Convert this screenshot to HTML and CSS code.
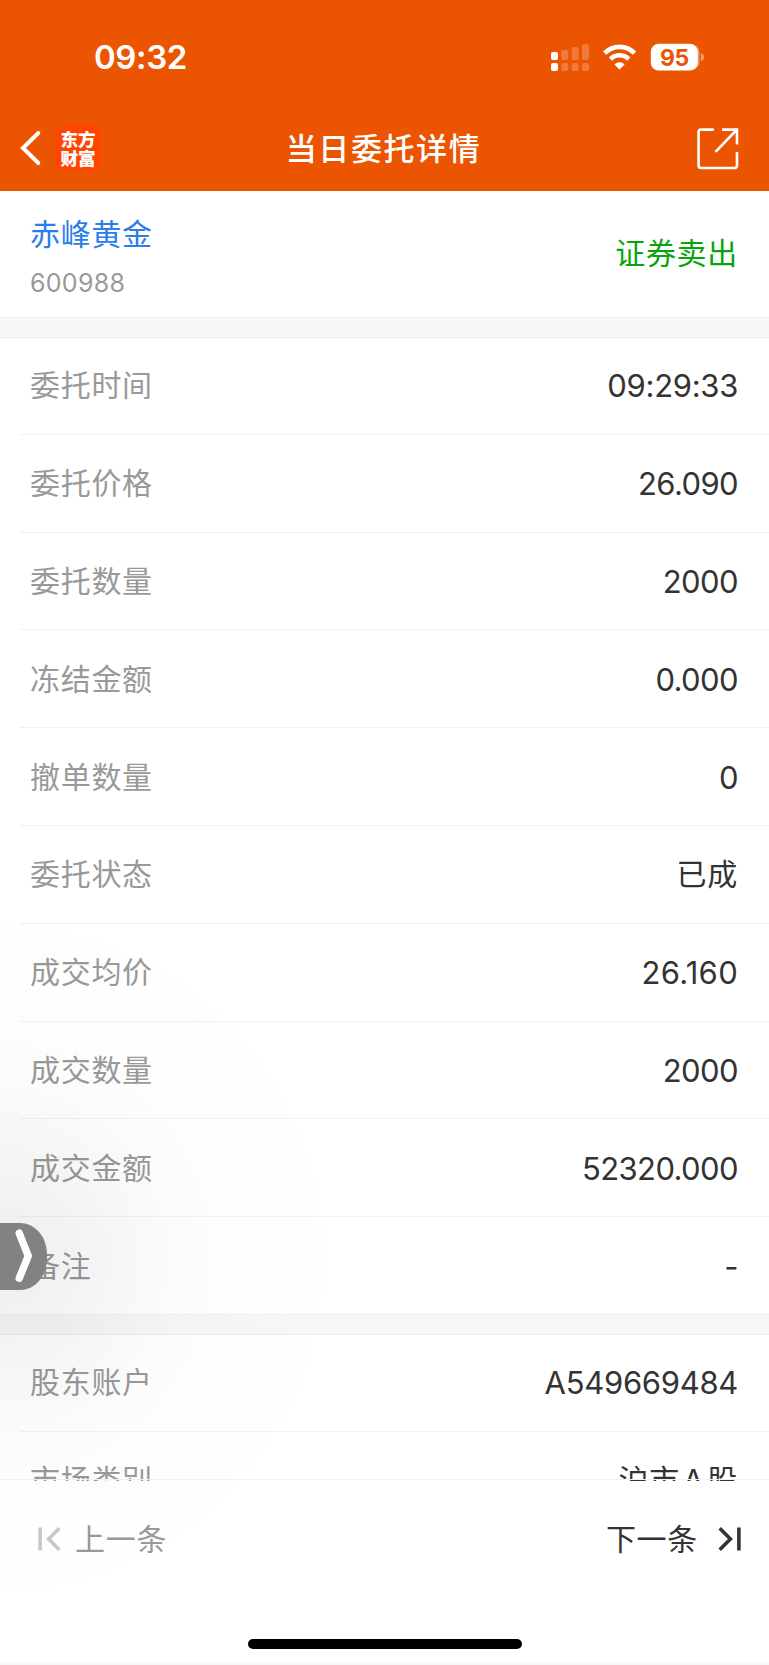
FILE: index.html
```html
<!DOCTYPE html>
<html lang="zh-CN">
<head>
<meta charset="utf-8">
<title>当日委托详情</title>
<link rel="stylesheet" href="styles.css">
</head>
<body>
<div class="screen">
  <header class="header">
    <div class="status">
      <span class="clock">09:32</span>
      <svg class="status-icons" width="154" height="30" viewBox="0 0 154 30" fill="#fff">
        <rect x="1" y="9" width="7" height="8" rx="2"/>
        <rect x="1" y="20" width="7" height="8" rx="2"/>
        <g opacity=".22">
          <rect x="11.3" y="7" width="7" height="10" rx="2"/><rect x="11.3" y="20" width="7" height="8" rx="2"/>
          <rect x="21.7" y="4" width="7" height="13" rx="2"/><rect x="21.7" y="20" width="7" height="8" rx="2"/>
          <rect x="32" y="1" width="7" height="16" rx="2"/><rect x="32" y="20" width="7" height="8" rx="2"/>
        </g>
        <g fill="none" stroke="#fff" stroke-width="4.6">
          <path d="M54.6 10.2a21 21 0 0 1 30 0"/>
          <path d="M60.4 16.1a13 13 0 0 1 18.400 0"/>
        </g>
        <path d="M64.4 21.4a7.2 7.2 0 0 1 10.2 0l-5.1 5.2z"/>
        <path opacity=".4" d="M140 1.2h1.500q8 1.500 8 8v9.600q0 6.500-8 8h-1.500z"/>
        <rect x="100.800" y=".8" width="47" height="26.800" rx="8"/>
        <path opacity=".45" d="M151 10.300q3 1.200 3 4t-3 4z"/>
      </svg>
      <span class="battery">95</span>
    </div>
    <nav class="nav">
      <div class="nav-left">
        <svg width="22" height="36" viewBox="0 0 22 36" fill="none" stroke="#fff" stroke-width="4" stroke-linecap="round" stroke-linejoin="miter"><path d="M18.300 3 3 18l15.300 15"/></svg>
        <div class="logo"><span>东方</span><span>财富</span></div>
      </div>
      <h1 class="title">当日委托详情</h1>
      <svg class="share" width="42" height="42" viewBox="0 0 42 42" fill="none" stroke="#fff" stroke-width="2.600"><path d="M16.800 1.600H4Q1.600 1.600 1.600 4v33.600Q1.600 40 4 40h33.600q2.400 0 2.400-2.400V24M25 1.600h15v15M39.500 2 18.500 23.800"/></svg>
    </nav>
  </header>

  <main class="content">
    <section class="stock">
      <div>
        <div class="name">赤峰黄金</div>
        <div class="code">600988</div>
      </div>
      <div class="side">证券卖出</div>
    </section>
    <section class="list">
      <div class="row"><span class="label">委托时间</span><span class="value time">09:29:33</span></div>
      <div class="row"><span class="label">委托价格</span><span class="value">26.090</span></div>
      <div class="row"><span class="label">委托数量</span><span class="value">2000</span></div>
      <div class="row"><span class="label">冻结金额</span><span class="value">0.000</span></div>
      <div class="row"><span class="label">撤单数量</span><span class="value">0</span></div>
      <div class="row"><span class="label">委托状态</span><span class="value han">已成</span></div>
      <div class="row"><span class="label">成交均价</span><span class="value avg">26.160</span></div>
      <div class="row"><span class="label">成交数量</span><span class="value">2000</span></div>
      <div class="row"><span class="label">成交金额</span><span class="value">52320.000</span></div>
      <div class="row"><span class="label">备注</span><span class="value">-</span></div>
    </section>
    <section class="list">
      <div class="row"><span class="label">股东账户</span><span class="value time">A549669484</span></div>
      <div class="row"><span class="label">市场类别</span><span class="value han">沪市<span class="latin">A</span>股</span></div>
    </section>
  </main>

  <footer class="footer">
    <div class="pager">
      <span class="prev"><svg width="23" height="26" viewBox="0 0 23 26" fill="none" stroke="#c8c8c8" stroke-width="3.600"><path d="M2.100 1.600v22.800M21.300 2.300 10.600 13l10.700 10.700"/></svg>上一条</span>
      <span class="next">下一条<svg width="23" height="26" viewBox="0 0 23 26" fill="none" stroke="#333" stroke-width="3.600"><path d="M20.900 1.600v22.800M1.700 2.300 12.400 13 1.700 23.700"/></svg></span>
    </div>
    <div class="home"></div>
  </footer>

  <div class="shade"></div>
  <div class="handle"><svg width="18" height="54" viewBox="0 0 18 54" fill="none" stroke="#fff" stroke-width="7.400" stroke-linecap="round" stroke-linejoin="round"><path d="M4.200 4.200 13.300 26.800 4.200 49.400"/></svg></div>
</div>
</body>
</html>
```
FILE: styles.css
```css
* { box-sizing: border-box; }
body {
  margin: 0;
  font-family: Inter, "Noto Sans CJK SC", sans-serif;
  color: #333;
}
.screen {
  position: relative;
  width: 769px;
  height: 1665px;
  overflow: hidden;
  display: flex;
  flex-direction: column;
  background: #fff;
}
.header {
  flex: none;
  height: 191px;
  background: #eb5502;
  color: #fff;
}
.status {
  position: relative;
  height: 105px;
  display: flex;
  justify-content: space-between;
  padding: 43px 65px 0 94px;
}
.clock {
  font-size: 33px;
  line-height: 29px;
  font-weight: 600;
  letter-spacing: -0.4px;
}
.battery {
  position: absolute;
  left: 651px;
  top: 44px;
  width: 47px;
  text-align: center;
  font-size: 23px;
  line-height: 28px;
  font-weight: 700;
  letter-spacing: -0.3px;
  color: #eb5502;
}
.nav {
  height: 86px;
  display: grid;
  grid-template-columns: 1fr auto 1fr;
  align-items: center;
  padding: 0 30px 0 20px;
}
.nav-left { display: flex; align-items: center; gap: 13px; }
.logo {
  width: 46px;
  height: 46px;
  border-radius: 9px;
  background: #ff4502;
  display: flex;
  flex-direction: column;
  align-items: center;
  justify-content: center;
  font: 900 17.6px/19.5px "Noto Sans CJK SC", sans-serif;
}
.title {
  margin: 2px -8px 0 0;
  font-size: 31px;
  line-height: 40px;
  font-weight: 500;
  letter-spacing: 1.6px;
}
.share { justify-self: end; margin-top: 2px; }
.content { height: 1290px; flex: none; overflow: hidden; }
.stock {
  height: 127px;
  display: flex;
  justify-content: space-between;
  align-items: center;
  padding: 0 31px 0 30px;
}
.name, .side, .label, .han, .pager {
  font-size: 30px;
  line-height: 44px;
  letter-spacing: 0.7px;
}
.name { color: #2b7de9; margin-top: 1px; }
.code {
  font-size: 25px;
  line-height: 32px;
  margin-top: 11px;
  letter-spacing: 0.3px;
  color: #999;
}
.side { color: #09a30d; margin-bottom: 3px; }
.list {
  border-top: 19px solid #f6f7f9;
  box-shadow: inset 0 1px #ededef, 0 -1px #ededef;
}
.row {
  height: 97.8px;
  margin-left: 20px;
  padding: 0 31px 0 10px;
  display: flex;
  justify-content: space-between;
  align-items: center;
  border-bottom: 1px solid #f1f1f2;
}
.label { color: #999; }
.value {
  margin-top: 2px;
  font-size: 31px;
  line-height: 44px;
  letter-spacing: -0.6px;
}
.value.time { letter-spacing: -0.3px; }
.value.avg { letter-spacing: 0.3px; }
.value.han { margin-top: 0; font-size: 30px; letter-spacing: 0.7px; }
.latin { margin: 0 3px; }
.footer {
  flex: 1;
  margin-top: -2px;
  border-top: 1px solid #f1f1f2;
  border-bottom: 3px solid #f7f8f9;
}
.pager {
  height: 118px;
  display: flex;
  justify-content: space-between;
  align-items: center;
  padding: 0 28px 0 38px;
}
.prev, .next { display: flex; align-items: center; }
.prev { gap: 14px; color: #999; }
.next { gap: 20px; }
.home {
  width: 274px;
  height: 10px;
  margin: 41px auto 0;
  border-radius: 5px;
  background: #000;
}
.shade {
  position: absolute;
  left: 0;
  top: 900px;
  width: 380px;
  height: 740px;
  background: radial-gradient(ellipse 360px 370px at 0 358px, rgba(0,0,0,.065), rgba(0,0,0,.042) 25%, rgba(0,0,0,.012) 52%, rgba(0,0,0,.004) 80%, transparent);
}
.handle {
  position: absolute;
  left: 0;
  top: 1223px;
  width: 47px;
  height: 67px;
  padding: 6px 0 0 15px;
  border-radius: 0 27px 27px 0 / 0 31px 31px 0;
  background: #828282;
}
```
